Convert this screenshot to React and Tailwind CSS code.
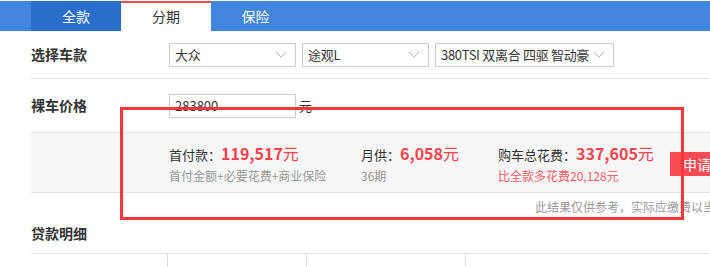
import React from 'react';

const font = { fontFamily: '"Noto Sans CJK SC", "Noto Sans", sans-serif' };

function Chevron() {
  return (
    <svg width="12" height="8" viewBox="0 0 12 8" className="shrink-0">
      <polyline points="1,1 6,6 11,1" fill="none" stroke="#b5b5b5" strokeWidth="1" />
    </svg>
  );
}

function Select({ width, children }) {
  return (
    <div className={`${width} h-[24px] border border-[#cccccc] flex items-center justify-between pl-[5px] pr-[8px] text-[13px] text-[#333]`}>
      <span className="whitespace-nowrap tracking-[-0.3px]">{children}</span>
      <Chevron />
    </div>
  );
}

export default function App() {
  return (
    <div className="w-[710px] h-[267px] overflow-hidden bg-white relative" style={font}>
      <div className="pt-px">
        <div className="h-[30px] bg-[#4285dc] pl-[31px] flex text-[14px]">
          <div className="w-[90px] bg-[#2a6ecc] text-white flex items-center justify-center">全款</div>
          <div className="w-[90px] bg-white text-[#333] border-t-2 border-[#f24a4f] flex items-center justify-center pb-[2px]">分期</div>
          <div className="w-[89px] text-white flex items-center justify-center">保险</div>
        </div>
      </div>

      <div className="pl-[31px]">
        <div className="h-[48px] border-b border-[#e3e3e3] flex items-center">
          <div className="w-[138px] shrink-0 text-[14px] font-bold text-[#333]">选择车款</div>
          <div className="flex gap-[6px]">
            <Select width="w-[127px]">大众</Select>
            <Select width="w-[127px]">途观L</Select>
            <Select width="w-[179px]">380TSI 双离合 四驱 智动豪</Select>
          </div>
        </div>

        <div className="h-[54px] border-b border-[#e3e3e3] flex items-center">
          <div className="w-[138px] shrink-0 text-[14px] font-bold text-[#333]">裸车价格</div>
          <div className="w-[127px] h-[24px] border border-[#cccccc] flex items-center pl-[5px] text-[13px] text-[#333]">283800</div>
          <span className="ml-[3px] text-[13px] text-[#333]">元</span>
        </div>

        <div className="h-[60px] bg-[#f6f6f6] border-b border-[#e3e3e3] flex items-start pl-[138px] pt-[10px] whitespace-nowrap">
          <div className="w-[192px] shrink-0">
            <div className="leading-[20px] text-[13px] text-[#333]">
              首付款：<span className="text-[16px] font-bold text-[#f5444f]">119,517</span>
              <span className="text-[16px] text-[#f5444f]">元</span>
            </div>
            <div className="mt-[2px] leading-[18px] text-[12px] text-[#999]">首付金额+必要花费+商业保险</div>
          </div>
          <div className="w-[137px] shrink-0">
            <div className="leading-[20px] text-[13px] text-[#333]">
              月供：<span className="text-[16px] font-bold text-[#f5444f]">6,058</span>
              <span className="text-[16px] text-[#f5444f]">元</span>
            </div>
            <div className="mt-[2px] leading-[18px] text-[12px] text-[#999]">36期</div>
          </div>
          <div className="w-[172px] shrink-0">
            <div className="leading-[20px] text-[13px] text-[#333]">
              购车总花费：<span className="text-[16px] font-bold text-[#f5444f]">337,605</span>
              <span className="text-[16px] text-[#f5444f]">元</span>
            </div>
            <div className="mt-[2px] leading-[18px] text-[12px] text-[#f65a62]">比全款多花费20,128元</div>
          </div>
          <div className="shrink-0 mt-[9px] h-[24px] pl-[13px] pr-[12px] bg-[#f84c55] text-white text-[14px] flex items-center">申请贷款</div>
        </div>

        <div className="h-[28px] leading-[28px] pl-[504px] text-[12px] text-[#999] whitespace-nowrap">此结果仅供参考，实际应缴费以当地为准</div>

        <div className="h-[33px] pt-[2px] border-b border-[#e3e3e3]">
          <div className="leading-[20px] text-[14px] font-bold text-[#333]">贷款明细</div>
        </div>

        <div className="flex h-[40px]">
          <div className="w-[137px] shrink-0 border-r border-[#dddddd]"></div>
          <div className="w-[139px] shrink-0 border-r border-[#dddddd]"></div>
          <div className="w-[159px] shrink-0 border-r border-[#dddddd] flex gap-[26px] pl-[25px] pt-[8px] text-[12px] text-[#999]">
            <span>30%</span>
            <span>40%</span>
            <span>50%</span>
          </div>
          <div className="flex-1"></div>
        </div>
      </div>

      <div className="absolute left-[120px] top-[107px] w-[564px] h-[113px] border-[3px] border-[#f3373a]"></div>
    </div>
  );
}
